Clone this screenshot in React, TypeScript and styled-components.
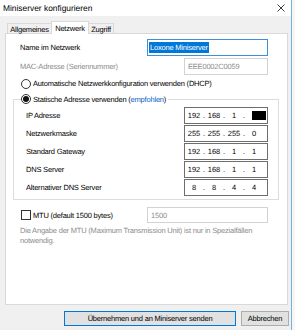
import React from "react";
import styled, { createGlobalStyle } from "styled-components";

const Global = createGlobalStyle`
  html, body { margin: 0; padding: 0; background: #f6f6f6; }
  body {
    font-family: "Liberation Sans", Arial, sans-serif;
    text-rendering: geometricPrecision;
  }
  * { box-sizing: border-box; }
`;

const Window = styled.div`
  width: 292px;
  height: 330px;
  background: #f0f0f0;
  border-right: 1px solid #6cb4e4;
  display: flex;
  flex-direction: column;
  font-size: 7.5px;
  letter-spacing: -0.2px;
  color: #000;
  overflow: hidden;
`;

const TitleBar = styled.div`
  height: 16px;
  flex: none;
  background: #fff;
  display: flex;
  align-items: center;
  justify-content: space-between;
  padding: 0 6px 0 3px;
`;

const Title = styled.div`
  font-size: 8.4px;
  letter-spacing: 0;
  color: #000;
`;

const Body = styled.div`
  padding: 5px 2px 0 5px;
  display: flex;
  flex-direction: column;
`;

const Tabs = styled.div`
  display: flex;
  align-items: flex-end;
  height: 13px;
  margin: 0 0 -1px 2px;
  position: relative;
  z-index: 1;
`;

const Tab = styled.div<{ $w: number; $active?: boolean }>`
  width: ${(p) => p.$w}px;
  height: ${(p) => (p.$active ? 13 : 10)}px;
  margin-bottom: ${(p) => (p.$active ? 0 : 1)}px;
  margin-left: -1px;
  background: ${(p) => (p.$active ? "#fff" : "#f0f0f0")};
  border: 1px solid #d9d9d9;
  border-bottom: none;
  display: flex;
  align-items: center;
  justify-content: center;
  padding-top: ${(p) => (p.$active ? 0 : 1)}px;
  &:first-child { margin-left: 0; }
`;

const Panel = styled.div`
  width: 283px;
  height: 272px;
  background: #fff;
  border: 1px solid #d9d9d9;
  padding: 5px 8px 0 7px;
  display: flex;
  flex-direction: column;
`;

const Row = styled.div<{ $mt?: number }>`
  display: flex;
  align-items: center;
  justify-content: space-between;
  height: 17px;
  margin: ${(p) => p.$mt ?? 0}px 11px 0 7px;
`;

const Label = styled.span<{ $muted?: boolean }>`
  color: ${(p) => (p.$muted ? "#8c8c8c" : "#000")};
`;

const TextBox = styled.div<{ $w: number; $h?: number; $tone?: "focus" | "disabled" | "normal" }>`
  width: ${(p) => p.$w}px;
  height: ${(p) => p.$h ?? 17}px;
  flex: none;
  border: 1px solid
    ${(p) => (p.$tone === "focus" ? "#3d8fdc" : p.$tone === "disabled" ? "#d2d2d2" : "#7a7a7a")};
  background: #fff;
  display: flex;
  align-items: center;
  padding-left: ${(p) => (p.$tone === "focus" ? 1 : 3)}px;
  color: ${(p) => (p.$tone === "disabled" ? "#8c8c8c" : "#000")};
`;

const Selected = styled.span`
  background: #0078d7;
  color: #fff;
  padding: 1px 1px;
  line-height: 9px;
`;

const OptionRow = styled.div<{ $mt?: number }>`
  display: flex;
  align-items: center;
  gap: 2px;
  height: 11px;
  margin: ${(p) => p.$mt ?? 0}px 0 0 8px;
`;

const Radio = styled.span<{ $checked?: boolean }>`
  width: 10px;
  height: 10px;
  flex: none;
  border-radius: 50%;
  border: 1px solid #333;
  background: #fff;
  display: flex;
  align-items: center;
  justify-content: center;
  &::after {
    content: "";
    width: 6px;
    height: 6px;
    border-radius: 50%;
    background: ${(p) => (p.$checked ? "#111" : "transparent")};
  }
`;

const Check = styled.span`
  width: 10px;
  height: 10px;
  flex: none;
  border: 1px solid #333;
  background: #fff;
`;

const Group = styled.div`
  margin-top: 10px;
  height: 101px;
  border: 1px solid #dcdcdc;
  display: flex;
  flex-direction: column;
`;

const Legend = styled.div`
  align-self: flex-start;
  display: flex;
  align-items: center;
  gap: 2px;
  height: 10px;
  margin: -6px 0 0 7px;
  padding-right: 2px;
  background: #fff;
`;

const Link = styled.span`
  color: #0a64c8;
`;

const GroupRow = styled.div<{ $mt: number }>`
  display: flex;
  align-items: center;
  justify-content: space-between;
  height: 17px;
  margin: ${(p) => p.$mt}px 10px 0 12px;
`;

const IpBox = styled.div`
  width: 84px;
  height: 17px;
  flex: none;
  border: 1px solid #6e6e6e;
  background: #fff;
  display: flex;
  align-items: center;
  padding-left: 1px;
  letter-spacing: 0;
`;

const Seg = styled.span`
  width: 16px;
  text-align: center;
`;

const Dot = styled.span`
  width: 4px;
  text-align: center;
`;

const Redacted = styled.span`
  width: 14px;
  height: 9px;
  margin-left: 6px;
  background: #000;
`;

const MtuRow = styled.div`
  display: flex;
  align-items: center;
  height: 16px;
  margin: 7px 11px 0 8px;
`;

const MtuLabel = styled.span`
  margin-left: 2px;
`;

const Spacer = styled.span`
  flex: 1;
`;

const Hint = styled.div`
  margin: 3px 11px 0 7px;
  line-height: 9.5px;
  color: #8c8c8c;
`;

const Buttons = styled.div`
  display: flex;
  justify-content: flex-end;
  gap: 5px;
  margin-top: 6px;
`;

const Button = styled.div<{ $w: number; $primary?: boolean }>`
  width: ${(p) => p.$w}px;
  height: 15px;
  background: #e1e1e1;
  border: 1px solid ${(p) => (p.$primary ? "#0078d7" : "#adadad")};
  display: flex;
  align-items: center;
  justify-content: center;
`;

function Ip({ parts, redactLast }: { parts: string[]; redactLast?: boolean }) {
  return (
    <IpBox>
      <Seg>{parts[0]}</Seg>
      <Dot>.</Dot>
      <Seg>{parts[1]}</Seg>
      <Dot>.</Dot>
      <Seg>{parts[2]}</Seg>
      <Dot>.</Dot>
      {redactLast ? <Redacted /> : <Seg>{parts[3]}</Seg>}
    </IpBox>
  );
}

export default function App() {
  return (
    <>
      <Global />
      <Window>
        <TitleBar>
          <Title>Miniserver konfigurieren</Title>
          <svg width="8" height="8" viewBox="0 0 8 8">
            <path d="M0.5 0.5 L7.5 7.5 M7.5 0.5 L0.5 7.5" stroke="#222" strokeWidth="0.9" fill="none" />
          </svg>
        </TitleBar>
        <Body>
          <Tabs>
            <Tab $w={45}>Allgemeines</Tab>
            <Tab $w={38} $active>Netzwerk</Tab>
            <Tab $w={26}>Zugriff</Tab>
          </Tabs>
          <Panel>
            <Row>
              <Label>Name im Netzwerk</Label>
              <TextBox $w={121} $tone="focus">
                <Selected>Loxone Miniserver</Selected>
              </TextBox>
            </Row>
            <Row $mt={2}>
              <Label $muted>MAC-Adresse (Seriennummer)</Label>
              <TextBox $w={84} $tone="disabled">EEE0002C0059</TextBox>
            </Row>
            <OptionRow $mt={3}>
              <Radio />
              <span>Automatische Netzwerkkonfiguration verwenden (DHCP)</span>
            </OptionRow>
            <Group>
              <Legend>
                <Radio $checked />
                <span>
                  Statische Adresse verwenden (<Link>empfohlen</Link>)
                </span>
              </Legend>
              <GroupRow $mt={3}>
                <Label>IP Adresse</Label>
                <Ip parts={["192", "168", "1", ""]} redactLast />
              </GroupRow>
              <GroupRow $mt={1}>
                <Label>Netzwerkmaske</Label>
                <Ip parts={["255", "255", "255", "0"]} />
              </GroupRow>
              <GroupRow $mt={1}>
                <Label>Standard Gateway</Label>
                <Ip parts={["192", "168", "1", "1"]} />
              </GroupRow>
              <GroupRow $mt={1}>
                <Label>DNS Server</Label>
                <Ip parts={["192", "168", "1", "1"]} />
              </GroupRow>
              <GroupRow $mt={1}>
                <Label>Alternativer DNS Server</Label>
                <Ip parts={["8", "8", "4", "4"]} />
              </GroupRow>
            </Group>
            <MtuRow>
              <Check />
              <MtuLabel>MTU (default 1500 bytes)</MtuLabel>
              <Spacer />
              <TextBox $w={121} $h={16} $tone="disabled">1500</TextBox>
            </MtuRow>
            <Hint>
              Die Angabe der MTU (Maximum Transmission Unit) ist nur in Spezialfällen notwendig.
            </Hint>
          </Panel>
          <Buttons>
            <Button $w={172} $primary>Übernehmen und an Miniserver senden</Button>
            <Button $w={48}>Abbrechen</Button>
          </Buttons>
        </Body>
      </Window>
    </>
  );
}
